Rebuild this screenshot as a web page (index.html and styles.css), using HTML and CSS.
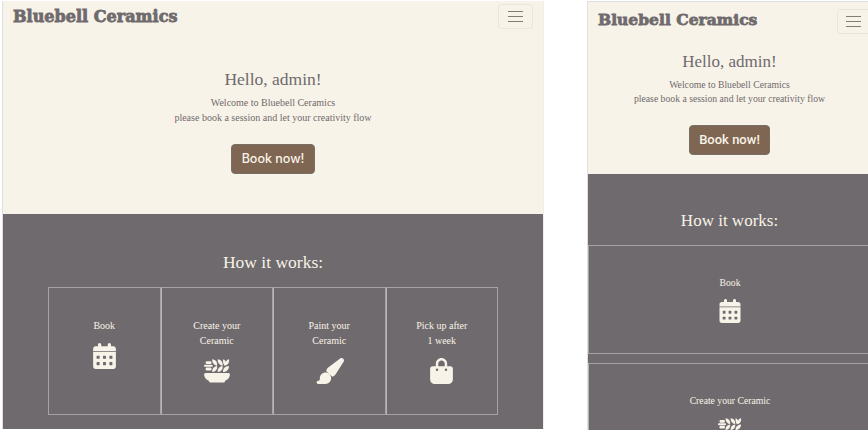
FILE: index.html
```html
<!DOCTYPE html>
<html lang="en">
<head>
<meta charset="utf-8">
<title>Bluebell Ceramics</title>
<link rel="stylesheet" href="styles.css">
</head>
<body>
<svg class="symbols" aria-hidden="true">
  <symbol id="calendar" viewBox="0 0 448 512"><path d="M96 32v32H48C21.500 64 0 85.500 0 112v48h448v-48c0-26.500-21.500-48-48-48h-48V32c0-17.700-14.300-32-32-32s-32 14.300-32 32v32H160V32c0-17.700-14.300-32-32-32S96 14.300 96 32zM448 178H0v286c0 26.500 21.500 48 48 48h352c26.500 0 48-21.500 48-48V178z"/><g class="holes"><rect x="68" y="252" width="60" height="60" rx="12"/><rect x="194" y="252" width="60" height="60" rx="12"/><rect x="320" y="252" width="60" height="60" rx="12"/><rect x="68" y="376" width="60" height="60" rx="12"/><rect x="194" y="376" width="60" height="60" rx="12"/><rect x="320" y="376" width="60" height="60" rx="12"/></g></symbol>
  <symbol id="bowl" viewBox="0 0 512 512"><path d="M162 26c72 10 106 58 96 126-62-8-102-60-96-126zM270 26c72 10 106 58 96 126-62-8-102-60-96-126zM376 26c30 10 46 28 54 54 10-30 30-48 62-54 12 74-26 122-88 126-22-28-36-70-28-126zM162 278c72-10 106-54 96-120-62 8-102 54-96 120zM270 278c72-10 106-54 96-120-62 8-102 54-96 120zM376 278c72-2 122-54 114-120-72 2-122 54-114 120z"/><rect x="32" y="62" width="116" height="58" rx="26"/><rect x="0" y="134" width="172" height="40" rx="18"/><rect x="32" y="188" width="116" height="58" rx="26"/><path d="M32 296h448c18 0 32 14 30 32-6 54-39 100-94 121v6c0 14-12 25-25 25H121c-13 0-25-11-25-25v-6C41 428 8 382 2 328c-2-18 12-32 30-32z"/></symbol>
  <symbol id="brush" viewBox="0 0 576 512"><path d="M339.300 367.100c27.300-3.900 51.900-19.400 67.200-42.900L568.200 74.100c12.600-19.500 9.400-45.300-7.600-61.200S517.700-4.400 499.100 9.600L262.400 187.200c-24 18-38.200 46.100-38.400 76.100zM320 400c0-61.900-50.100-112-112-112S96 338.100 96 400c0 3.900.2 7.800.6 11.600C98.400 429.100 86.400 448 68.800 448H64c-17.700 0-32 14.300-32 32s14.300 32 32 32h144c61.900 0 112-50.100 112-112z"/></symbol>
  <symbol id="bag" viewBox="0 0 448 512"><path d="M160 112v48h128v-48c0-35-29-64-64-64s-64 29-64 64zM112 160v-48C112 50 162 0 224 0s112 50 112 112v48h64c27 0 48 21 48 48v208c0 53-43 96-96 96H96c-53 0-96-43-96-96V208c0-27 21-48 48-48z"/><g class="holes"><circle cx="136" cy="232" r="24"/><circle cx="312" cy="232" r="24"/></g></symbol>
</svg>
<main class="screens">
  <section class="screen tablet">
    <header class="navbar"><a class="brand">Bluebell Ceramics</a><button class="toggler" aria-label="Menu"><span></span><span></span><span></span></button></header>
    <div class="hero"><h1>Hello, admin!</h1><p>Welcome to Bluebell Ceramics<br>please book a session and let your creativity flow</p><a class="book">Book now!</a></div>
    <div class="steps"><h2>How it works:</h2>
      <div class="cards">
        <div class="card"><p>Book</p><svg class="narrow"><use href="#calendar"/></svg></div>
        <div class="card"><p>Create your<br>Ceramic</p><svg><use href="#bowl"/></svg></div>
        <div class="card"><p>Paint your<br>Ceramic</p><svg class="wide"><use href="#brush"/></svg></div>
        <div class="card"><p>Pick up after<br>1 week</p><svg class="narrow"><use href="#bag"/></svg></div>
      </div>
    </div>
  </section>
  <section class="screen phone">
    <header class="navbar"><a class="brand">Bluebell Ceramics</a><button class="toggler" aria-label="Menu"><span></span><span></span><span></span></button></header>
    <div class="hero"><h1>Hello, admin!</h1><p>Welcome to Bluebell Ceramics<br>please book a session and let your creativity flow</p><a class="book">Book now!</a></div>
    <div class="steps"><h2>How it works:</h2>
      <div class="cards">
        <div class="card"><p>Book</p><svg class="narrow"><use href="#calendar"/></svg></div>
        <div class="card"><p>Create your Ceramic</p><svg><use href="#bowl"/></svg></div>
      </div>
    </div>
  </section>
</main>
</body>
</html>
```
FILE: styles.css
```css
* { box-sizing: border-box; }
body { margin: 0; background: #fff; height: 430px; overflow: hidden; font-family: "Liberation Serif", serif; }
h1, h2, p { margin: 0; font-weight: 400; }
.symbols { display: none; }
.holes { fill: #6f6a6d; }
.screens { display: flex; gap: 43px; padding: 1px 0 0 2px; width: 900px; height: 430px; }
.screen { display: flex; flex-direction: column; flex: none; height: 428px; overflow: hidden; background: #f8f3e8; border-left: 1px solid #dee0e0; color: #6f6a6d; text-align: center; }
.tablet { width: 542px; border-right: 1px solid #f1eee8; }
.phone { width: 285px; height: 429px; border-top: 1px solid #dcdfdf; }
.navbar { display: flex; justify-content: space-between; align-items: flex-start; flex: none; height: 48px; padding: 3px 10px 0; }
.brand { font: bold 16px/25px "DejaVu Serif", serif; -webkit-text-stroke: .8px #6f6a6d; white-space: nowrap; letter-spacing: .03px; }
.toggler { display: flex; flex-direction: column; justify-content: center; align-items: center; gap: 4px; width: 35px; height: 25px; padding: 0; background: none; border: 1px solid #ebe6dc; border-radius: 3px; }
.toggler span { width: 15px; height: 1px; background: #7f7e76; }
.hero { flex: none; height: 165px; padding-top: 19px; }
.hero h1 { font-size: 17.500px; line-height: 22px; }
.hero p { margin-top: 5px; font-size: 10px; line-height: 15px; }
.book { display: block; width: 84px; height: 30px; margin: 19px auto 0; background: #7f6652; border: 1px solid #776f64; border-radius: 4px; color: #f8f3e8; font: 500 12.500px/28px Inter, sans-serif; letter-spacing: 0; white-space: nowrap; }
.steps { flex: 1; background: #6f6a6d; color: #f8f3e8; padding-top: 37px; }
.steps h2 { font-size: 17.500px; line-height: 22px; }
.cards { display: grid; grid-template-columns: repeat(4, 1fr); width: 450px; margin: 14px auto 0 45px; }
.card { height: 128px; border: 1px solid #a5a3a5; padding-top: 30px; font-size: 10px; line-height: 15px; display: flex; flex-direction: column; align-items: center; }
.card + .card { border-left-color: #b8b6b8; }
.card svg { display: block; width: 26px; height: 26px; margin-top: 10px; fill: #f8f3e8; }
.card svg.narrow { width: 23px; }
.card svg.wide { width: 29px; }
.phone .navbar { height: 42px; padding-top: 5px; padding-right: 0; }
.phone .toggler { margin: 2px 0 0; padding-right: 2px; }
.phone .brand { font-size: 15.500px; }
.phone .hero { height: 130px; padding-top: 7px; padding-right: 1px; }
.phone h1, .phone h2 { font-size: 17px; }
.phone .hero p { font-size: 9.700px; line-height: 14.300px; }
.phone .book { width: 81px; font: 500 13px/28px Roboto, sans-serif; letter-spacing: 0; margin-top: 18px; }
.phone .steps { padding-top: 36px; }
.phone h2 { padding-right: 1px; }
.phone .cards { display: block; width: 284px; margin: 13px 0 0; }
.phone .card { height: 109px; margin-bottom: 9px; padding-top: 29px; font-size: 9.700px; }
.phone .card svg { width: 24px; height: 24px; margin-top: 9px; }
.phone .card svg.narrow { width: 22px; }
```
